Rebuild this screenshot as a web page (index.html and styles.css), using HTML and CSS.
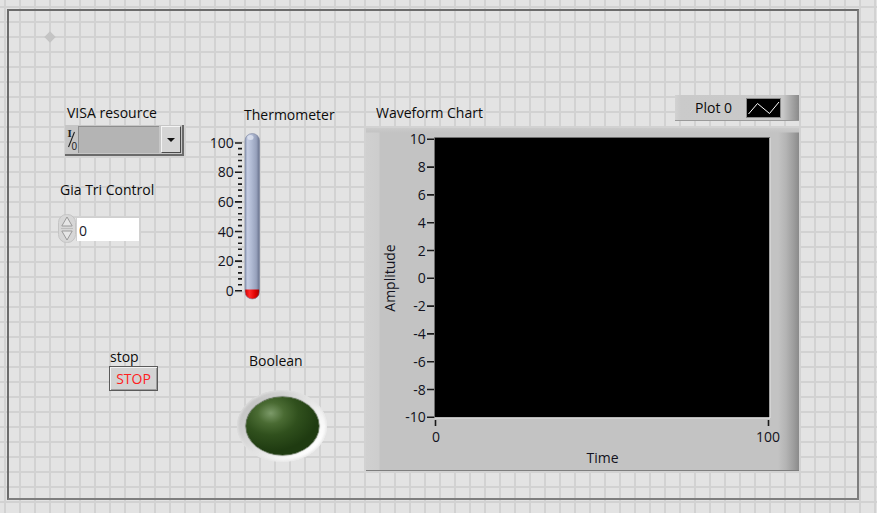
FILE: index.html
```html
<!DOCTYPE html>
<html>
<head>
<meta charset="utf-8">
<title>Front Panel</title>
<link rel="stylesheet" href="styles.css">
</head>
<body>
<div class="panel">
  <div class="origin"></div>

  <div class="ctl visa">
    <div class="label lbl-visa">VISA resource</div>
    <div class="visa-box">
      <span class="io">
        <svg width="12" height="27" viewBox="0 0 12 27">
          <text x="1.5" y="11" class="io-i">I</text>
          <path d="M2.5 21 L8.5 6" stroke="#222" stroke-width="1.1" fill="none"/>
          <text x="5.6" y="23.5" class="io-o">0</text>
        </svg>
      </span>
      <span class="visa-field"></span>
      <span class="visa-btn"><span class="tri"></span></span>
    </div>
  </div>

  <div class="ctl gia">
    <div class="label">Gia Tri Control</div>
    <div class="num">
      <svg class="arrows" width="18" height="29" viewBox="0 0 18 29">
        <rect x="0.5" y="0.5" width="17" height="28" rx="8" fill="#d7d7d7" stroke="#c4c4c4"/>
        <path d="M9 3 L3.8 12 L14.2 12 Z" fill="#e6e6e6" stroke="#9a9a9a" stroke-width="1"/>
        <path d="M3 14.5 L15 14.5" stroke="#bdbdbd" stroke-width="1"/>
        <path d="M9 26 L3.8 17 L14.2 17 Z" fill="#e6e6e6" stroke="#9a9a9a" stroke-width="1"/>
      </svg>
      <div class="num-field">0</div>
    </div>
  </div>

  <div class="ctl thermo">
    <div class="label lbl-thermo">Thermometer</div>
    <svg class="thermo-svg" width="60" height="175" viewBox="205 128 60 175">
      <defs>
        <linearGradient id="tube" x1="0" y1="0" x2="1" y2="0">
          <stop offset="0" stop-color="#8d99b6"/>
          <stop offset="0.18" stop-color="#c4cce2"/>
          <stop offset="0.45" stop-color="#b0bad3"/>
          <stop offset="0.78" stop-color="#97a1bc"/>
          <stop offset="1" stop-color="#68718c"/>
        </linearGradient>
        <linearGradient id="red" x1="0" y1="0" x2="1" y2="0">
          <stop offset="0" stop-color="#d00000"/>
          <stop offset="0.3" stop-color="#ff2a2a"/>
          <stop offset="0.7" stop-color="#e00000"/>
          <stop offset="1" stop-color="#a00000"/>
        </linearGradient>
        <clipPath id="tubeclip">
          <rect x="245" y="133.5" width="14.5" height="165.5" rx="7.25"/>
        </clipPath>
      </defs>
      <g class="tick-labels">
        <text x="233.8" y="148">100</text>
        <text x="233.8" y="177.3">80</text>
        <text x="233.8" y="206.9">60</text>
        <text x="233.8" y="236.5">40</text>
        <text x="233.8" y="266.1">20</text>
        <text x="233.8" y="295.7">0</text>
      </g>
      <path class="ticks-major" d="M235 143 H242 M235 172.3 H242 M235 201.9 H242 M235 231.5 H242 M235 261.1 H242 M235 290.7 H242"/>
      <path class="ticks-minor" d="M238 148.6 H242 M238 154.5 H242 M238 160.5 H242 M238 166.4 H242 M238 178.2 H242 M238 184.1 H242 M238 190.1 H242 M238 196 H242 M238 207.8 H242 M238 213.7 H242 M238 219.7 H242 M238 225.6 H242 M238 237.4 H242 M238 243.3 H242 M238 249.3 H242 M238 255.2 H242 M238 267 H242 M238 272.9 H242 M238 278.9 H242 M238 284.8 H242"/>
      <rect x="245" y="133.5" width="14.5" height="165.5" rx="7.25" fill="url(#tube)"/>
      <g clip-path="url(#tubeclip)">
        <rect x="245" y="289.5" width="14.5" height="10" fill="url(#red)"/>
        <ellipse cx="250.5" cy="137.5" rx="3" ry="2.5" fill="#dfe4f0" opacity="0.8"/>
      </g>
      <rect x="245" y="133.5" width="14.5" height="165.5" rx="7.25" fill="none" stroke="#7d86a0" stroke-width="0.6"/>
    </svg>
  </div>

  <div class="ctl stop">
    <div class="label lbl-stop">stop</div>
    <button class="stop-btn">STOP</button>
  </div>

  <div class="ctl bool">
    <div class="label lbl-bool">Boolean</div>
    <div class="halo"><div class="led"></div></div>
  </div>

  <div class="ctl chart">
    <div class="label lbl-chart">Waveform Chart</div>
    <div class="chart-box">
      <svg class="chart-svg" width="433" height="342" viewBox="366 128 433 342">
        <rect x="435" y="138" width="334.5" height="279.3" fill="#000"/>
        <path d="M434.5 417.8 V137.5 H770" stroke="#6f6f6f" stroke-width="1" fill="none"/>
        <path d="M435 418 H770 V138" stroke="#e4e4e4" stroke-width="1" fill="none"/>
        <path class="axis-ticks" d="M427 139.3 H434 M427 167.1 H434 M427 194.9 H434 M427 222.7 H434 M427 250.5 H434 M427 278.3 H434 M427 306.1 H434 M427 333.9 H434 M427 361.7 H434 M427 389.5 H434 M427 417.3 H434 M435.5 420 V426 M768.5 420 V426"/>
        <g class="y-labels">
          <text x="425.8" y="144.3">10</text>
          <text x="425.8" y="172.1">8</text>
          <text x="425.8" y="199.9">6</text>
          <text x="425.8" y="227.7">4</text>
          <text x="425.8" y="255.5">2</text>
          <text x="425.8" y="283.3">0</text>
          <text x="425.8" y="311.1">-2</text>
          <text x="425.8" y="338.9">-4</text>
          <text x="425.8" y="366.7">-6</text>
          <text x="425.8" y="394.5">-8</text>
          <text x="425.8" y="422.3">-10</text>
        </g>
        <g class="x-labels">
          <text x="436" y="441.5">0</text>
          <text x="768" y="441.5">100</text>
          <text x="602.5" y="462.5">Time</text>
        </g>
        <text class="amp" transform="translate(395 278) rotate(-90)" x="0" y="0">Amplitude</text>
      </svg>
    </div>
  </div>

  <div class="legend">
    <span class="legend-name">Plot 0</span>
    <span class="swatch">
      <svg width="33" height="18" viewBox="0 0 33 18">
        <polyline points="1.5,15 10.5,4.5 22.5,14.5 32,3" fill="none" stroke="#fff" stroke-width="1"/>
      </svg>
    </span>
  </div>
</div>
</body>
</html>
```

FILE: styles.css
```css
html, body {
  margin: 0;
}

body {
  width: 877px;
  height: 513px;
  box-sizing: border-box;
  padding: 9px 0 0 7px;
  overflow: hidden;
  background-color: #e3e3e3;
  background-image:
    linear-gradient(90deg, #d2d2d2 2px, transparent 2px),
    linear-gradient(180deg, #d2d2d2 2px, transparent 2px);
  background-size: 15px 15px;
  background-position: 4px 6px;
  font-family: "Open Sans", "Noto Sans", sans-serif;
  font-size: 14px;
  color: #0c0c0c;
}

.panel {
  position: relative;
  width: 848px;
  height: 487px;
  border: 2px solid;
  border-color: #6c6c6c #7e7e7e #7e7e7e #6c6c6c;
}

.origin {
  position: absolute;
  left: 37px;
  top: 22px;
  width: 8px;
  height: 8px;
  background: #c4c4c4;
  transform: rotate(45deg);
}

.ctl {
  position: absolute;
  display: flex;
  flex-direction: column;
  align-items: flex-start;
}

.label {
  line-height: 16px;
  white-space: nowrap;
}

/* VISA resource */
.visa { left: 56px; top: 94px; }
.lbl-visa { margin-left: 2px; }

.visa-box {
  margin-top: 4px;
  display: flex;
  width: 119px;
  height: 31px;
  box-sizing: border-box;
  padding: 1px 1px 1px 1px;
  background: #c6c6c6;
  border-right: 2px solid #6a6a6a;
  border-bottom: 2px solid #6a6a6a;
}

.io {
  width: 12px;
  height: 27px;
  display: block;
}

.io svg { display: block; }

.io-i {
  font-family: "Liberation Serif", serif;
  font-size: 11px;
  font-weight: bold;
  fill: #222;
}

.io-o {
  font-family: "Liberation Sans", sans-serif;
  font-size: 10px;
  fill: #222;
}

.visa-field {
  width: 81px;
  height: 27px;
  box-sizing: border-box;
  background: #b4b4b4;
  border-top: 1px solid #8e8e8e;
  border-left: 1px solid #8e8e8e;
}

.visa-btn {
  width: 20px;
  height: 27px;
  margin-left: 2px;
  box-sizing: border-box;
  background: #d5d5d5;
  border-top: 1px solid #f4f4f4;
  border-left: 1px solid #f4f4f4;
  border-right: 1px solid #4a4a4a;
  border-bottom: 1px solid #4a4a4a;
  display: flex;
  align-items: center;
  justify-content: center;
}

.tri {
  width: 0;
  height: 0;
  border-left: 4px solid transparent;
  border-right: 4px solid transparent;
  border-top: 4px solid #111;
  margin-top: 1px;
}

/* Numeric */
.gia { left: 51px; top: 171px; }

.num {
  margin-top: 16px;
  margin-left: -2px;
  display: flex;
  align-items: center;
}

.arrows { display: block; }

.num-field {
  width: 63px;
  height: 24px;
  box-sizing: border-box;
  background: #ffffff;
  border-top: 1px solid #d0d0d0;
  border-left: 1px solid #d0d0d0;
  padding: 3px 0 0 2px;
  line-height: 20px;
  color: #1a1a2a;
}

/* Thermometer */
.thermo { left: 196px; top: 96px; }
.lbl-thermo { margin-left: 39px; }

.thermo-svg {
  display: block;
  margin-top: 5px;
}

.tick-labels text,
.y-labels text {
  font-family: "Open Sans", "Noto Sans", sans-serif;
  font-size: 14px;
  fill: #121220;
  text-anchor: end;
}

.ticks-major,
.ticks-minor,
.axis-ticks {
  stroke: #1a1a1a;
  stroke-width: 1.6;
  fill: none;
}

/* Stop */
.stop { left: 100px; top: 338px; }
.lbl-stop { margin-left: 1px; }

.stop-btn {
  margin: 1px 0 0 0;
  width: 49px;
  height: 25px;
  padding: 0;
  box-sizing: border-box;
  background: #d3d3d3;
  border: 1px solid #5a5a5a;
  box-shadow: inset 1px 1px 0 #f2f2f2, inset -1px -1px 0 #9c9c9c;
  font-family: "Open Sans", "Noto Sans", sans-serif;
  font-size: 14px;
  line-height: 21px;
  color: #ff2020;
}

/* Boolean LED */
.bool { left: 228px; top: 342px; }
.lbl-bool { margin-left: 12px; }

.halo {
  margin-top: 21px;
  width: 90px;
  height: 72px;
  border-radius: 50%;
  display: flex;
  align-items: center;
  justify-content: center;
  background: linear-gradient(135deg, #c6c6c6 18%, #dedede 45%, #f6f6f6 70%, #ffffff 85%);
  box-shadow: 0 0 3px 1px #e3e3e3 inset;
}

.led {
  width: 73px;
  height: 58px;
  border-radius: 50%;
  background: radial-gradient(ellipse 65% 65% at 34% 28%, #7c9a69 0%, #4a6b33 28%, #30501d 58%, #1f3b11 100%);
  box-shadow: 0 0 1px 0.5px #223818;
}

/* Waveform chart */
.chart { left: 357px; top: 94px; }
.lbl-chart { margin-left: 10px; }

.chart-box {
  margin-top: 7px;
  width: 433px;
  height: 343px;
  box-sizing: border-box;
  border-bottom: 1px solid #7e7e7e;
  background:
    linear-gradient(180deg, #cbcbcb 0, #c4c4c4 4px, transparent 5px),
    linear-gradient(90deg, #d0d0d0 0, #cdcdcd 13px, #c3c3c3 14px, #c3c3c3 412px, #b4b4b4 420px, #9c9c9c 428px, #8a8a8a 433px);
}

.chart-svg { display: block; }

.x-labels text {
  font-family: "Open Sans", "Noto Sans", sans-serif;
  font-size: 14px;
  fill: #121220;
  text-anchor: middle;
}

.amp {
  font-family: "Open Sans", "Noto Sans", sans-serif;
  font-size: 14px;
  fill: #121220;
  text-anchor: middle;
}

/* Plot legend */
.legend {
  position: absolute;
  left: 666px;
  top: 84px;
  width: 124px;
  height: 26px;
  box-sizing: border-box;
  padding-left: 20px;
  display: flex;
  align-items: center;
  border-bottom: 1px solid #9a9a9a;
  background: linear-gradient(90deg, #d2d2d2 0, #cacaca 6px, #c8c8c8 108px, #a8a8a8 116px, #8a8a8a 124px);
}

.legend-name {
  line-height: 16px;
  white-space: nowrap;
}

.swatch {
  margin-left: auto;
  margin-right: 18px;
  width: 35px;
  height: 20px;
  box-sizing: border-box;
  background: #000;
  border: 1px solid #8a8a8a;
  display: block;
}

.swatch svg { display: block; }
```
